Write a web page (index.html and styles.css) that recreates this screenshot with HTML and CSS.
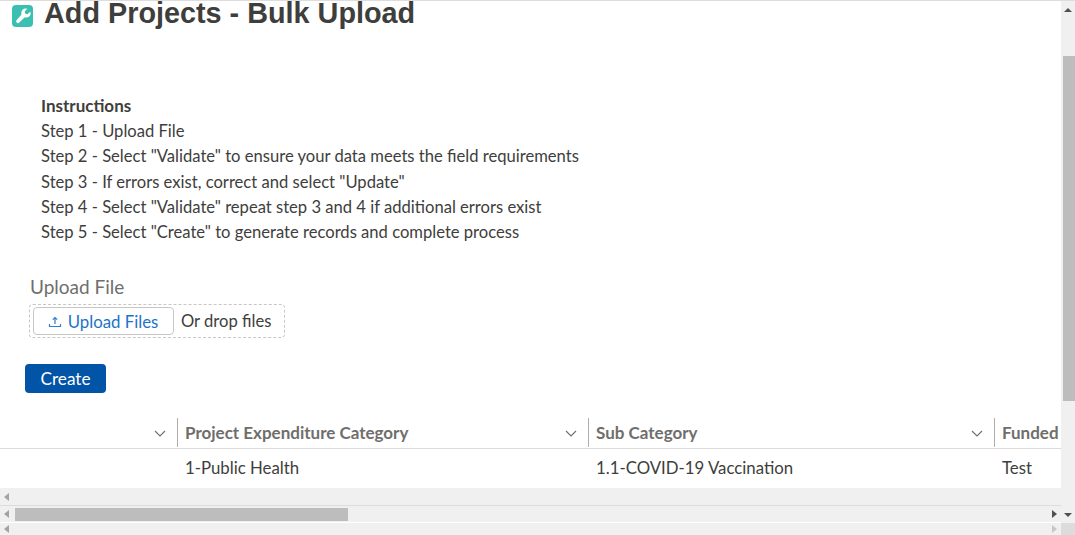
FILE: index.html
```html
<!DOCTYPE html>
<html lang="en">
<head>
    <meta charset="UTF-8">
    <meta name="viewport" content="width=device-width, initial-scale=1.0">
    <title>Add Projects - Bulk Upload</title>
    <link rel="stylesheet" href="styles.css">
</head>
<body>
    <div class="window">
        <div class="page">
            <div class="page-header">
                <span class="page-icon">
                    <svg viewBox="0 0 24 24" width="16" height="16"><path fill="#fff" d="M22.7 5.600l-3.900 3.900-3.300-1-1-3.300 3.900-3.900c-2.400-.9-5.200-.4-7.100 1.500-1.900 1.900-2.400 4.600-1.500 7L2.600 18c-1.100 1.100-1.100 2.800 0 3.900 1.100 1.100 2.800 1.100 3.900 0l8.200-8.200c2.400.9 5.100.4 7-1.500 1.900-1.900 2.400-4.600 1-6.600z"/></svg>
                </span>
                <h1>Add Projects - Bulk Upload</h1>
            </div>
            <div class="instructions">
                <strong>Instructions</strong>
                <div>Step 1 - Upload File</div>
                <div>Step 2 - Select "Validate" to ensure your data meets the field requirements</div>
                <div>Step 3 - If errors exist, correct and select "Update"</div>
                <div>Step 4 - Select "Validate" repeat step 3 and 4 if additional errors exist</div>
                <div>Step 5 - Select "Create" to generate records and complete process</div>
            </div>
            <div class="upload">
                <div class="upload-label">Upload File</div>
                <div class="dropzone">
                    <button class="upload-btn">
                        <svg viewBox="0 0 14 14" width="14" height="14"><path fill="none" stroke="#2a7fd0" stroke-width="1.200" d="M7 10V3.500M4.800 5.700L7 3.500l2.200 2.200M1.500 10v2.500h11V10"/></svg>
                        Upload Files
                    </button>
                    <span class="drop-text">Or drop files</span>
                </div>
            </div>
            <button class="create-btn">Create</button>
            <div class="table">
                <div class="row head">
                    <div class="cell first"><svg class="chev" viewBox="0 0 12 8" width="12" height="8"><path fill="none" stroke="#706e6b" stroke-width="1.100" d="M1 1l5 5 5-5"/></svg></div>
                    <div class="cell second"><span>Project Expenditure Category</span><svg class="chev" viewBox="0 0 12 8" width="12" height="8"><path fill="none" stroke="#706e6b" stroke-width="1.100" d="M1 1l5 5 5-5"/></svg></div>
                    <div class="cell third"><span>Sub Category</span><svg class="chev" viewBox="0 0 12 8" width="12" height="8"><path fill="none" stroke="#706e6b" stroke-width="1.100" d="M1 1l5 5 5-5"/></svg></div>
                    <div class="cell fourth"><span>Funded</span></div>
                </div>
                <div class="row body">
                    <div class="cell first"></div>
                    <div class="cell second">1-Public Health</div>
                    <div class="cell third">1.1-COVID-19 Vaccination</div>
                    <div class="cell fourth">Test</div>
                </div>
            </div>
            <div class="hbar inner"><span class="arrow left"></span></div>
            <div class="hbar main">
                <span class="arrow left"></span>
                <div class="hthumb"></div>
                <span class="arrow right"></span>
            </div>
            <div class="hbar outer">
                <span class="arrow left"></span>
                <span class="arrow right faint"></span>
            </div>
        </div>
        <div class="vbar">
            <span class="arrow up"></span>
            <div class="vthumb"></div>
            <span class="arrow down"></span>
            <div class="corner"></div>
        </div>
    </div>
</body>
</html>
```

FILE: styles.css
```css
html, body {
    margin: 0;
    padding: 0;
    height: 100%;
    overflow: hidden;
}
body {
    font-family: "Lato", "Open Sans", sans-serif;
    font-size: 16.6px;
    color: #3e3e3c;
    background-color: #fff;
}
.window {
    display: flex;
    height: 535px;
    box-sizing: border-box;
    border-top: 1px solid #ddd;
}
.page {
    width: 1061px;
    display: flex;
    flex-direction: column;
    overflow: hidden;
}
.page-header {
    display: flex;
    align-items: flex-start;
    height: 28px;
    padding-left: 12px;
}
.page-icon {
    width: 21px;
    height: 22px;
    margin-top: 4px;
    background-color: #3bbfb0;
    border-radius: 4px;
    display: flex;
    align-items: center;
    justify-content: center;
}
h1 {
    margin: -2px 0 0 11px;
    font-family: "Liberation Sans", Arial, sans-serif;
    font-size: 28.8px;
    line-height: 28px;
    font-weight: bold;
    color: #3e3e3c;
}
.instructions {
    margin-top: 64px;
    padding-left: 41px;
    line-height: 25.2px;
}
.instructions strong {
    display: block;
    margin-bottom: 1px;
    font-size: 17px;
}
.upload {
    margin-top: 30px;
    padding-left: 29px;
}
.upload-label {
    margin-left: 1px;
    font-size: 19px;
    line-height: 24px;
    color: #706e6b;
}
.dropzone {
    display: flex;
    align-items: center;
    width: 256px;
    height: 34px;
    margin-top: 5px;
    box-sizing: border-box;
    border: 1px dashed #c9c7c5;
    border-radius: 4px;
    padding-left: 3px;
}
.upload-btn {
    display: flex;
    align-items: center;
    justify-content: center;
    gap: 6px;
    width: 141px;
    height: 28px;
    padding: 0 1px 0 0;
    background-color: #fff;
    border: 1px solid #c9c7c5;
    border-radius: 4px;
    color: #1b74c9;
    font-family: inherit;
    font-size: 16.8px;
}
.drop-text {
    margin-left: 7px;
}
.create-btn {
    align-self: flex-start;
    width: 81px;
    height: 29px;
    margin: 26px 0 0 25px;
    padding: 0;
    background-color: #0254a6;
    border: none;
    border-radius: 4px;
    color: #fff;
    font-family: inherit;
    font-size: 17.2px;
}
.table {
    margin-top: 24px;
}
.row {
    display: flex;
}
.row.head {
    height: 31px;
    border-bottom: 1px solid #dddbda;
    font-size: 17px;
    font-weight: bold;
    color: #706e6b;
}
.row.body {
    height: 37px;
    padding-bottom: 2px;
    align-items: center;
    font-size: 16.8px;
}
.cell {
    box-sizing: border-box;
    padding-left: 7px;
    white-space: nowrap;
    overflow: hidden;
}
.row.head .cell {
    display: flex;
    align-items: center;
    justify-content: space-between;
    margin-top: 1px;
    padding-right: 11px;
    border-right: 1px solid #b0adab;
    height: 29px;
}
.row.head .cell.fourth {
    border-right: none;
    padding-right: 0;
}
.cell.first {
    width: 178px;
}
.row.head .cell.first {
    justify-content: flex-end;
}
.cell.second {
    width: 411px;
}
.cell.third {
    width: 406px;
}
.cell.fourth {
    flex: 1;
}
.chev {
    margin-top: 3px;
}
.hbar {
    display: flex;
    align-items: center;
    background-color: #f0f0f0;
}
.hbar.inner {
    height: 17px;
    border-bottom: 1px solid #dcdcdc;
}
.hbar.main {
    height: 16px;
    border-bottom: 1px solid #fff;
}
.hbar.outer {
    height: 12px;
}
.hthumb {
    width: 333px;
    height: 13px;
    margin-left: 6px;
    background-color: #bdbdbd;
}
.arrow {
    display: block;
    width: 0;
    height: 0;
    border-style: solid;
    border-color: transparent;
}
.arrow.left {
    margin-left: 4px;
    border-width: 4px 5px 4px 0;
    border-right-color: #a3a3a3;
}
.arrow.right {
    margin-left: auto;
    margin-right: 4px;
    border-width: 4px 0 4px 5px;
    border-left-color: #505050;
}
.arrow.right.faint {
    border-left-color: #c8c8c8;
}
.vbar {
    width: 14px;
    height: 534px;
    display: flex;
    flex-direction: column;
    align-items: center;
    background-color: #f0f0f0;
    position: relative;
}
.arrow.up {
    margin-top: 7px;
    border-width: 0 4px 4px 4px;
    border-bottom-color: #505050;
}
.vthumb {
    width: 12px;
    height: 345px;
    margin-top: 44px;
    margin-left: 2px;
    background-color: #bdbdbd;
}
.arrow.down {
    position: absolute;
    top: 512px;
    border-width: 4px 4px 0 4px;
    border-top-color: #505050;
}
.corner {
    position: absolute;
    left: 0;
    bottom: 0;
    width: 14px;
    height: 12px;
    background-color: #dcdcdc;
}
```
